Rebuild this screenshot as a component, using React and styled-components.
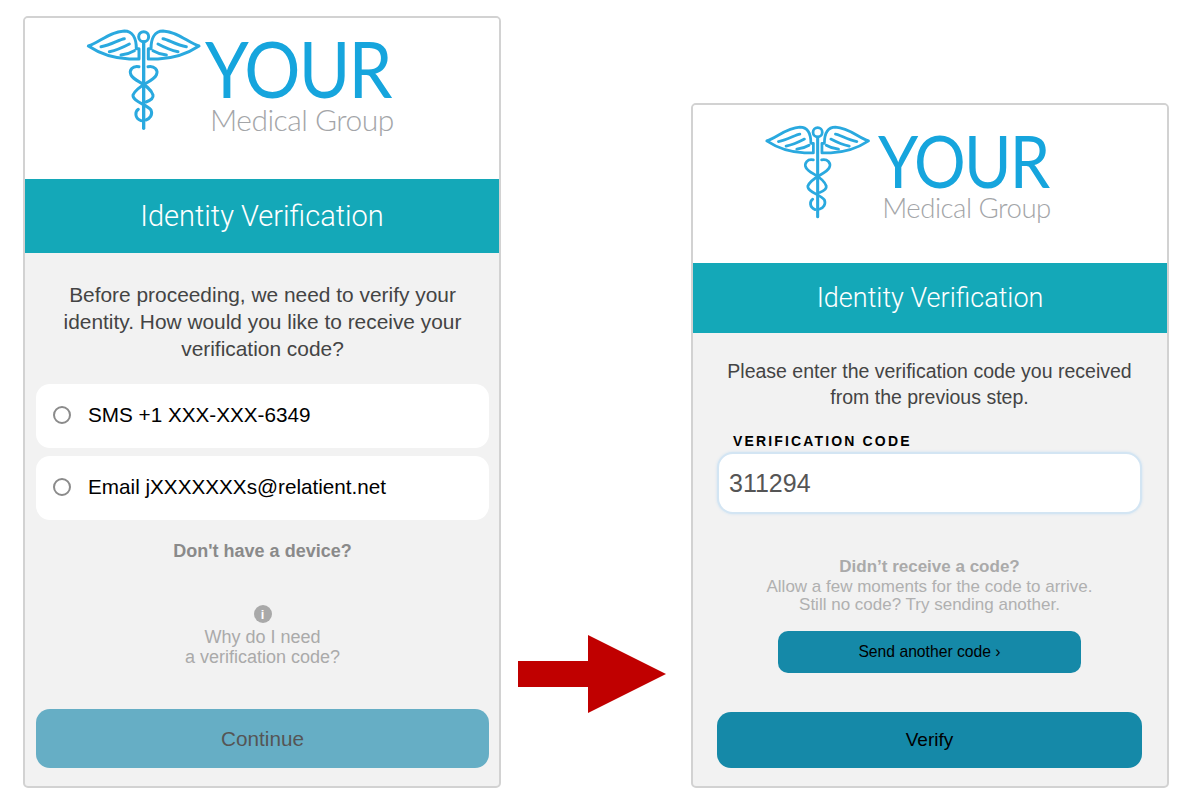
import React from 'react';
import styled, { createGlobalStyle } from 'styled-components';

const GlobalStyle = createGlobalStyle`
  html, body {
    margin: 0;
    padding: 0;
    background: #fff;
  }
  * {
    box-sizing: border-box;
  }
`;

const Page = styled.div`
  width: 1200px;
  height: 805px;
  padding: 16px 31px 17px 23px;
  display: flex;
  justify-content: space-between;
  align-items: flex-end;
  font-family: "Liberation Sans", Arial, sans-serif;
  overflow: hidden;
`;

const Card = styled.div`
  width: 478px;
  height: ${(p) => p.$height}px;
  display: flex;
  flex-direction: column;
  background: #f2f2f2;
  border: 2px solid #d2d2d2;
  border-radius: 5px;
  overflow: hidden;
`;

const LogoArea = styled.div`
  height: ${(p) => p.$height}px;
  background: #fff;
  display: flex;
  align-items: flex-start;
  padding: ${(p) => p.$pad};
`;

const LogoWords = styled.div`
  display: flex;
  flex-direction: column;
  align-items: flex-start;
  font-family: Lato, sans-serif;
  margin: ${(p) => p.$top}px 0 0 ${(p) => p.$gap}px;
`;

const LogoBig = styled.div`
  color: #16a5dd;
  font-size: ${(p) => p.$size}px;
  line-height: ${(p) => p.$line}px;
  font-weight: 400;
  letter-spacing: -2px;
  transform: scaleX(0.9);
  transform-origin: left center;
`;

const LogoSmall = styled.div`
  color: #a3a5a8;
  font-size: ${(p) => p.$size}px;
  line-height: ${(p) => p.$line}px;
  font-weight: 300;
  letter-spacing: -0.5px;
  margin: ${(p) => p.$top}px 0 0 ${(p) => p.$indent}px;
`;

const Banner = styled.div`
  height: ${(p) => p.$height}px;
  background: #14a8b8;
  color: #fff;
  display: flex;
  align-items: center;
  justify-content: center;
  font-family: Roboto, sans-serif;
  font-weight: 300;
  font-size: ${(p) => p.$size}px;
`;

const Body = styled.div`
  flex: 1;
  display: flex;
  flex-direction: column;
  align-items: center;
  padding: ${(p) => p.$pad};
`;

const Intro = styled.p`
  margin: 0;
  color: #444;
  text-align: center;
  font-size: ${(p) => p.$size}px;
  line-height: ${(p) => p.$line}px;
`;

const Option = styled.label`
  width: 100%;
  height: 64px;
  margin-top: ${(p) => p.$top}px;
  padding: 0 0 2px 17px;
  display: flex;
  align-items: center;
  gap: 17px;
  background: #fff;
  border-radius: 14px;
  color: #000;
  font-size: 20.7px;
`;

const Radio = styled.span`
  width: 18px;
  height: 18px;
  border: 2px solid #8b8b8b;
  border-radius: 50%;
  background: #fff;
`;

const DeviceLink = styled.div`
  margin-top: 21px;
  color: #8a8a8a;
  font-size: 18px;
  line-height: 20px;
  font-weight: 700;
`;

const InfoDot = styled.div`
  margin-top: 44px;
  width: 18px;
  height: 18px;
  border-radius: 50%;
  background: #a9a9a9;
  color: #fff;
  display: flex;
  align-items: center;
  justify-content: center;
  font-size: 13px;
  font-weight: 700;
`;

const WhyText = styled.div`
  margin-top: 4px;
  color: #aaa;
  text-align: center;
  font-size: 18px;
  line-height: 20px;
`;

const MainButton = styled.button`
  width: 100%;
  margin-top: auto;
  height: ${(p) => p.$height}px;
  border: none;
  border-radius: 14px;
  background: ${(p) => (p.$muted ? '#66aec5' : '#1589a8')};
  color: ${(p) => (p.$muted ? '#555' : '#000')};
  font-family: inherit;
  font-size: ${(p) => p.$size}px;
`;

const FieldLabel = styled.div`
  align-self: flex-start;
  margin: 23px 0 0 16px;
  color: #000;
  font-size: 14px;
  line-height: 16px;
  font-weight: 700;
  letter-spacing: 2.15px;
`;

const CodeInput = styled.input`
  width: 100%;
  height: 62px;
  margin-top: 3px;
  padding: 0 10px;
  border: 2px solid #d3e5f3;
  border-radius: 16px;
  background: #fff;
  box-shadow: 0 0 3px #cfe2f2;
  outline: none;
  color: #555;
  font-family: inherit;
  font-size: 25px;
`;

const HelpTitle = styled.div`
  margin-top: 44px;
  color: #aaa;
  font-size: 17px;
  line-height: 18px;
  font-weight: 700;
`;

const HelpText = styled.div`
  margin-top: 2px;
  color: #b0b0b0;
  text-align: center;
  font-size: 17px;
  line-height: 18px;
`;

const ResendButton = styled.button`
  width: 303px;
  height: 42px;
  margin-top: 17px;
  border: none;
  border-radius: 10px;
  background: #1589a8;
  color: #000;
  font-family: inherit;
  font-size: 15.7px;
`;

const Arrow = styled.svg`
  display: block;
  margin: 0 8px 75px 0;
  flex: none;
`;

// caduceus, coordinates are 3x screen px
const Wing = () => (
  <>
    <path d="M22 78C55 68 85 35 130 33C155 33 166 55 166 86L174 86L174 117L145 117C100 115 55 100 22 78Z" />
    <path d="M60 80C90 75 115 58 130 56M85 95C110 90 130 80 145 72M120 105C135 103 150 98 160 92" />
  </>
);

const Caduceus = ({ size }) => (
  <svg width={size} height={size * (120 / 130)} viewBox="0 0 390 360" fill="none" stroke="#2aa9df" strokeWidth="9" strokeLinejoin="round" strokeLinecap="round">
    <circle cx="188" cy="50" r="15" />
    <path d="M188 66V325" strokeWidth="10" />
    <Wing />
    <g transform="translate(376 0) scale(-1 1)">
      <Wing />
    </g>
    <path d="M174 140C155 136 143 150 150 165C160 186 204 190 216 225C218 235 206 242 195 246" />
    <path d="M201 140C220 136 233 150 226 165C216 186 168 195 156 225C154 245 196 252 210 270C216 285 206 296 195 300" />
    <path d="M172 268C162 275 160 294 180 302" />
  </svg>
);

const Logo = ({ scale, height, pad, gap }) => (
  <LogoArea $height={height} $pad={pad}>
    <Caduceus size={130 * scale} />
    <LogoWords $gap={gap} $top={20 * scale}>
      <LogoBig $size={78 * scale} $line={56 * scale}>YOUR</LogoBig>
      <LogoSmall $size={30 * scale} $line={32 * scale} $top={7 * scale} $indent={5 * scale}>Medical Group</LogoSmall>
    </LogoWords>
  </LogoArea>
);

const App = () => {
  return (
    <Page>
      <GlobalStyle />
      <Card $height={772}>
        <Logo scale={1} height={161} pad="2px 0 0 56px" gap={-6} />
        <Banner $height={74} $size={29}>Identity Verification</Banner>
        <Body $pad="28px 10px 18px 11px">
          <Intro $size={20.9} $line={27}>
            Before proceeding, we need to verify your<br />
            identity. How would you like to receive your<br />
            verification code?
          </Intro>
          <Option $top={22}>
            <Radio />
            SMS +1 XXX-XXX-6349
          </Option>
          <Option $top={8}>
            <Radio />
            Email jXXXXXXXs@relatient.net
          </Option>
          <DeviceLink>Don't have a device?</DeviceLink>
          <InfoDot>i</InfoDot>
          <WhyText>
            Why do I need<br />
            a verification code?
          </WhyText>
          <MainButton $height={59} $size={20.7} $muted>Continue</MainButton>
        </Body>
      </Card>
      <Arrow width="148" height="78" viewBox="0 0 148 78">
        <path d="M0 26H70V0L148 39L70 78V52H0Z" fill="#c00000" />
      </Arrow>
      <Card $height={685}>
        <Logo scale={0.92} height={158} pad="12px 0 0 67px" gap={-2} />
        <Banner $height={70} $size={27}>Identity Verification</Banner>
        <Body $pad="25px 25px 18px 24px">
          <Intro $size={19.5} $line={26}>
            Please enter the verification code you received<br />
            from the previous step.
          </Intro>
          <FieldLabel>VERIFICATION CODE</FieldLabel>
          <CodeInput readOnly value="311294" />
          <HelpTitle>Didn’t receive a code?</HelpTitle>
          <HelpText>
            Allow a few moments for the code to arrive.<br />
            Still no code? Try sending another.
          </HelpText>
          <ResendButton>Send another code ›</ResendButton>
          <MainButton $height={56} $size={19}>Verify</MainButton>
        </Body>
      </Card>
    </Page>
  );
};

export default App;
